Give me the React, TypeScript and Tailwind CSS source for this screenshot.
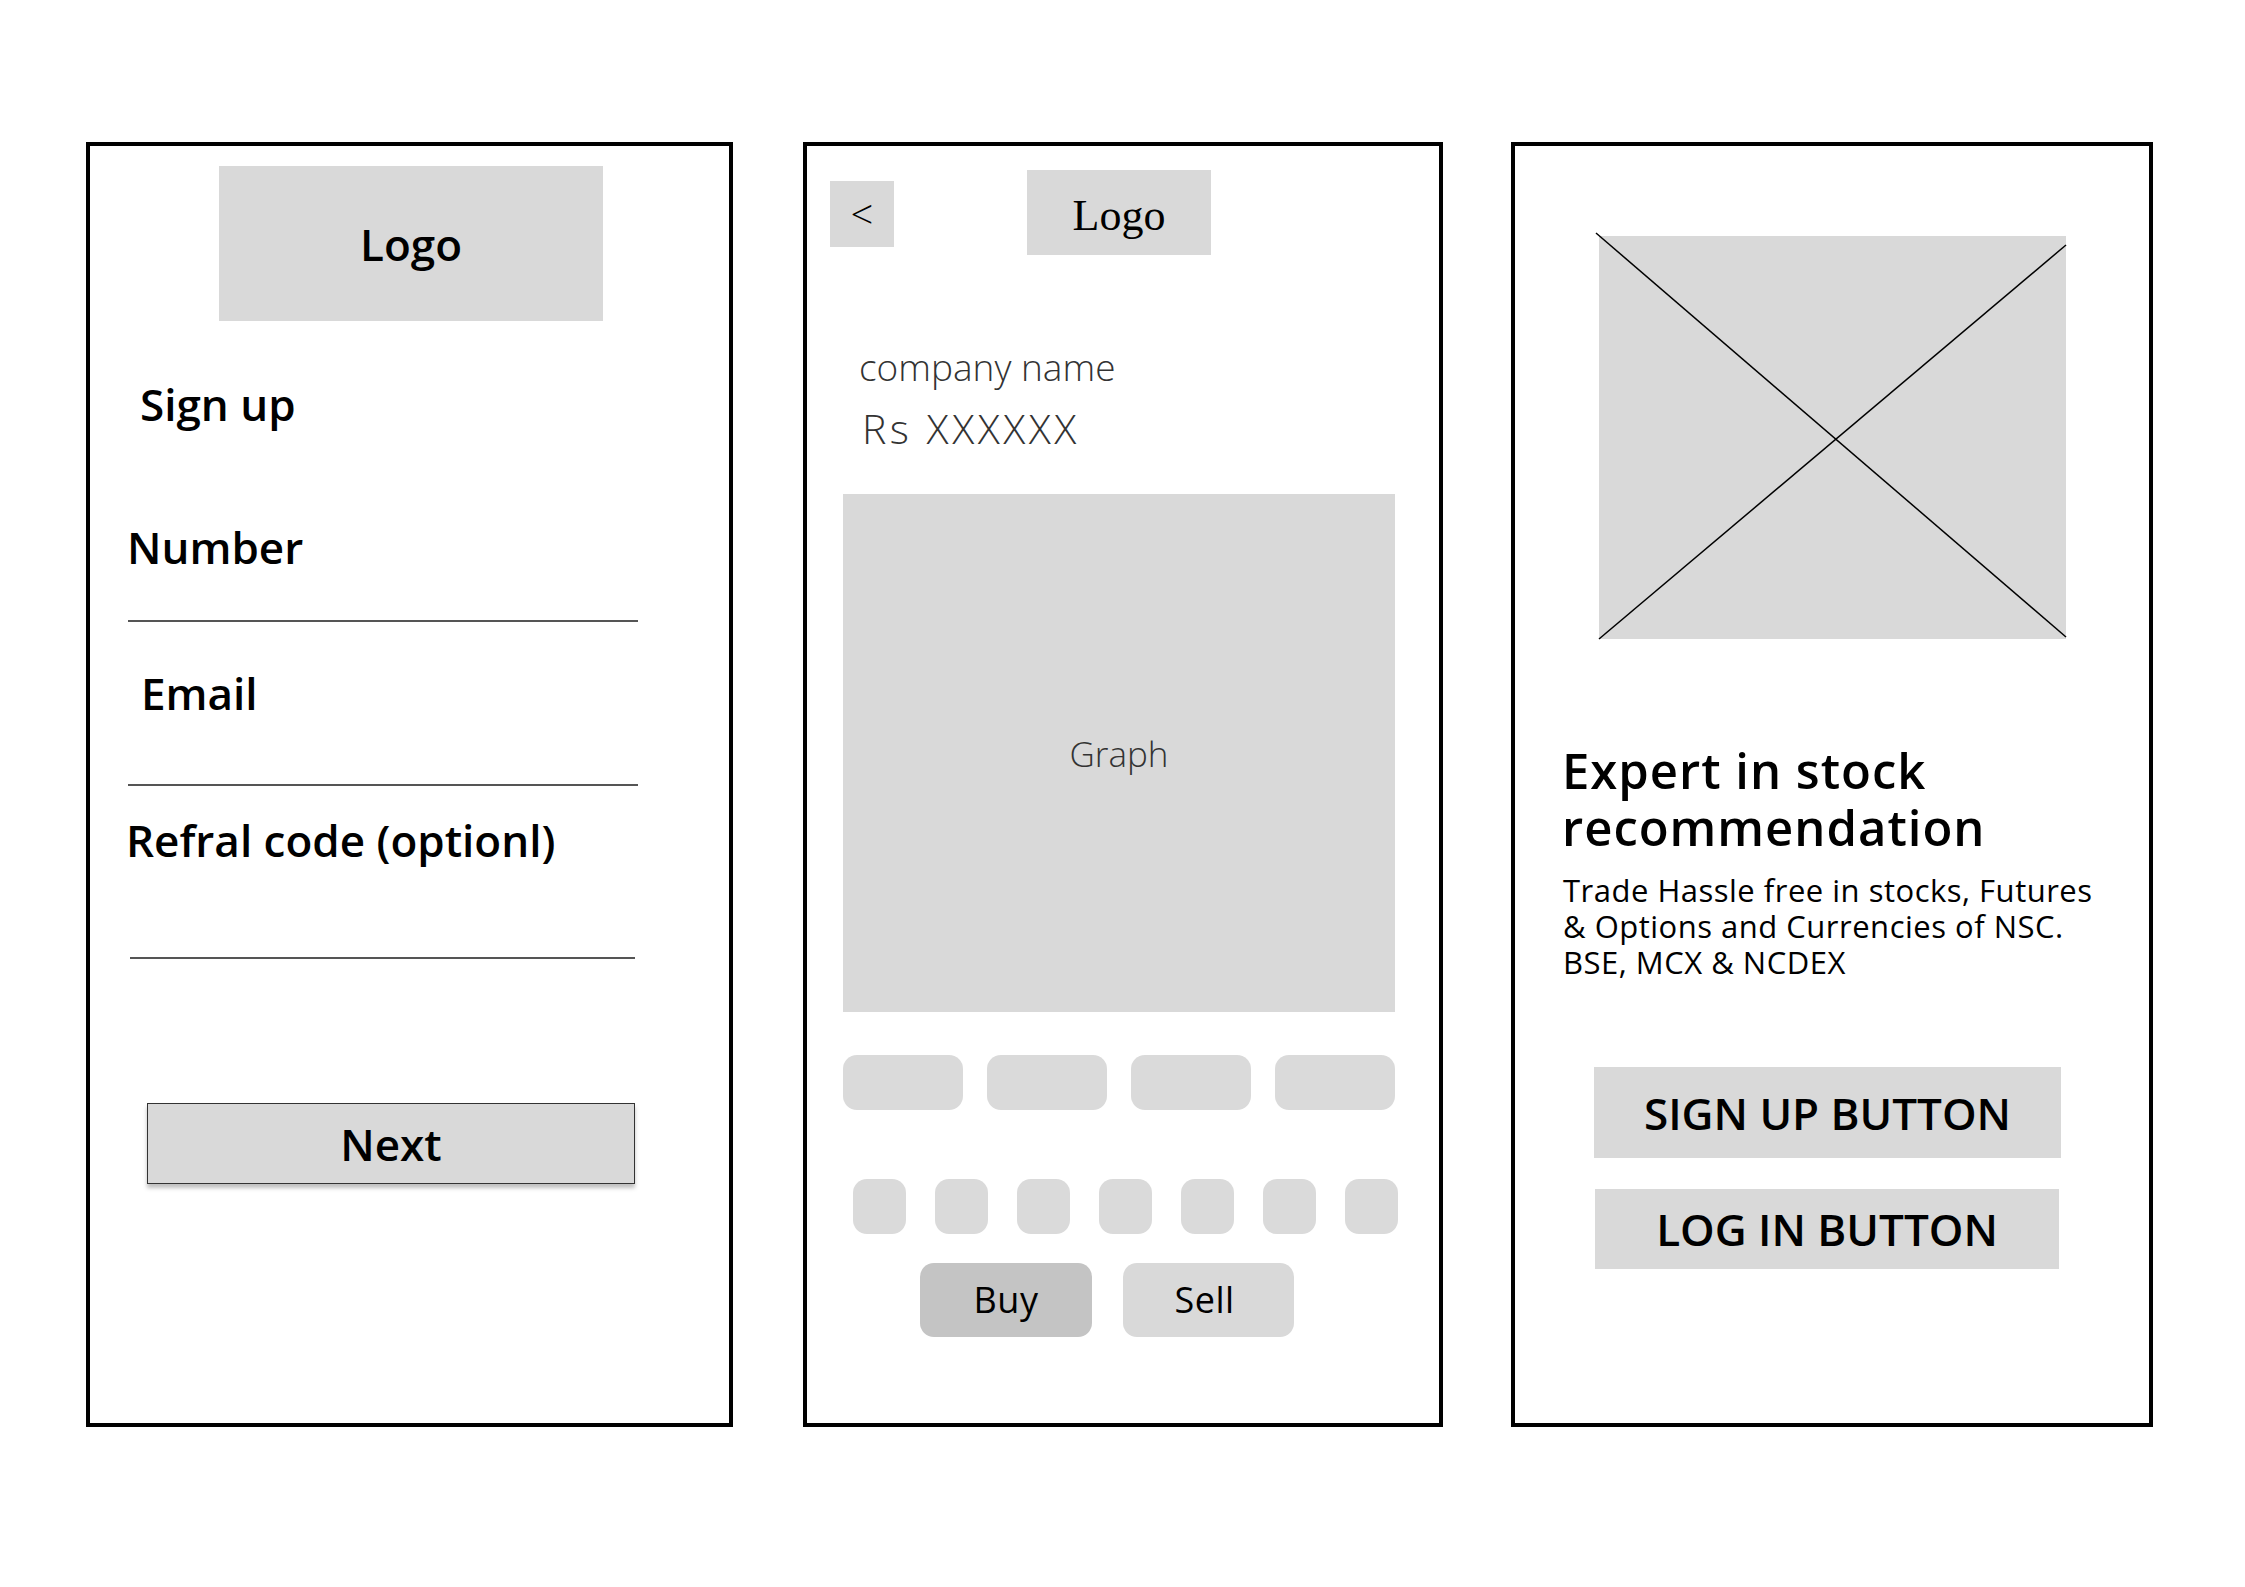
import React from 'react';

const label = "font-['Open_Sans',sans-serif] font-semibold text-[44px] leading-none text-black";
const thin = "font-['Open_Sans',sans-serif] font-light leading-none text-[#333]";

const SignUpScreen: React.FC = () => (
  <div className="w-[647px] h-[1285px] border-4 border-black flex flex-col">
    <div className="mt-[20px] ml-[129px] w-[384px] h-[155px] bg-[#d9d9d9] flex items-center justify-center">
      <span className={label}>Logo</span>
    </div>
    <p className={`${label} mt-[61px] ml-[50px]`}>Sign up</p>

    <p className={`${label} mt-[99px] ml-[37px]`}>Number</p>
    <div className="mt-[51px] ml-[38px] w-[510px] h-[2px] bg-[#555]" />

    <p className={`${label} mt-[49px] ml-[51px]`}>Email</p>
    <div className="mt-[69px] ml-[38px] w-[510px] h-[2px] bg-[#555]" />

    <p className={`${label} mt-[32px] ml-[36px]`}>Refral code (optionl)</p>
    <div className="mt-[95px] ml-[40px] w-[505px] h-[2px] bg-[#555]" />

    <button className="mt-[144px] ml-[57px] w-[488px] h-[81px] border border-[#333] bg-[#d9d9d9] shadow-[0_4px_4px_rgba(0,0,0,0.25)] flex items-center justify-center">
      <span className={label}>Next</span>
    </button>
  </div>
);

const StockScreen: React.FC = () => (
  <div className="ml-[70px] w-[640px] h-[1285px] border-4 border-black flex flex-col">
    {/* header */}
    <div className="flex items-start">
      <div className="mt-[35px] ml-[23px] w-[64px] h-[66px] bg-[#d9d9d9] flex items-center justify-center">
        <span className="font-['Open_Sans',sans-serif] font-light text-[40px] leading-none text-black">&lt;</span>
      </div>
      <div className="mt-[24px] ml-[133px] w-[184px] h-[85px] bg-[#d9d9d9] flex items-center justify-center pt-[6px]">
        <span className="font-['Liberation_Serif',serif] text-[44px] leading-none text-black">Logo</span>
      </div>
    </div>

    <p className={`${thin} text-[37px] mt-[93px] ml-[52px]`}>company name</p>
    <p className={`${thin} text-[41px] tracking-[3.5px] mt-[23px] ml-[55px]`}>Rs XXXXXX</p>

    <div className="mt-[45px] ml-[36px] w-[552px] h-[518px] bg-[#d9d9d9] flex items-center justify-center">
      <span className={`${thin} text-[35px]`}>Graph</span>
    </div>

    {/* range pills */}
    <div className="mt-[43px] ml-[36px] w-[552px] flex justify-between">
      {[0, 1, 2, 3].map((i) => (
        <div key={i} className="w-[120px] h-[55px] rounded-[14px] bg-[#dadada]" />
      ))}
    </div>

    {/* day chips */}
    <div className="mt-[69px] ml-[46px] w-[545px] flex justify-between">
      {[0, 1, 2, 3, 4, 5, 6].map((i) => (
        <div key={i} className="w-[53px] h-[55px] rounded-[14px] bg-[#dadada]" />
      ))}
    </div>

    <div className="mt-[29px] ml-[113px] flex">
      <button className="w-[172px] h-[74px] rounded-[14px] bg-[#c4c4c4] flex items-center justify-center font-['Open_Sans',sans-serif] text-[36px] tracking-[0.5px] leading-none text-black">
        Buy
      </button>
      <button className="ml-[31px] w-[171px] h-[74px] rounded-[14px] bg-[#d9d9d9] flex items-center justify-center pr-[8px] font-['Open_Sans',sans-serif] text-[36px] tracking-[0.5px] leading-none text-black">
        Sell
      </button>
    </div>
  </div>
);

const WelcomeScreen: React.FC = () => (
  <div className="ml-[68px] w-[642px] h-[1285px] border-4 border-black flex flex-col">
    <div className="relative mt-[90px] ml-[84px] w-[467px] h-[403px] bg-[#d9d9d9]">
      <svg className="absolute inset-0 overflow-visible" width="467" height="403" viewBox="0 0 467 403">
        <line x1="-3" y1="-3" x2="467" y2="401" stroke="#000" strokeWidth="1.5" />
        <line x1="0" y1="403" x2="467" y2="9" stroke="#000" strokeWidth="1.5" />
      </svg>
    </div>

    <h1 className="mt-[103px] ml-[47px] font-['Open_Sans',sans-serif] font-semibold text-[49px] tracking-[1px] leading-[57px] text-black">
      Expert in stock
      <br />
      recommendation
    </h1>
    <p className="mt-[16px] ml-[48px] font-['Open_Sans',sans-serif] text-[31px] tracking-[0.5px] leading-[36px] text-black">
      Trade Hassle free in stocks, Futures
      <br />
      &amp; Options and Currencies of NSC.
      <br />
      BSE, MCX &amp; NCDEX
    </p>

    <button className="mt-[87px] ml-[79px] w-[467px] h-[91px] bg-[#d9d9d9] flex items-center justify-center">
      <span className={label}>SIGN UP BUTTON</span>
    </button>
    <button className="mt-[31px] ml-[80px] w-[464px] h-[80px] bg-[#d9d9d9] flex items-center justify-center">
      <span className={`${label} text-[43px]`}>LOG IN BUTTON</span>
    </button>
  </div>
);

export default function App() {
  return (
    <div className="w-[2245px] h-[1587px] bg-white flex items-start pl-[86px] pt-[142px]">
      <SignUpScreen />
      <StockScreen />
      <WelcomeScreen />
    </div>
  );
}
